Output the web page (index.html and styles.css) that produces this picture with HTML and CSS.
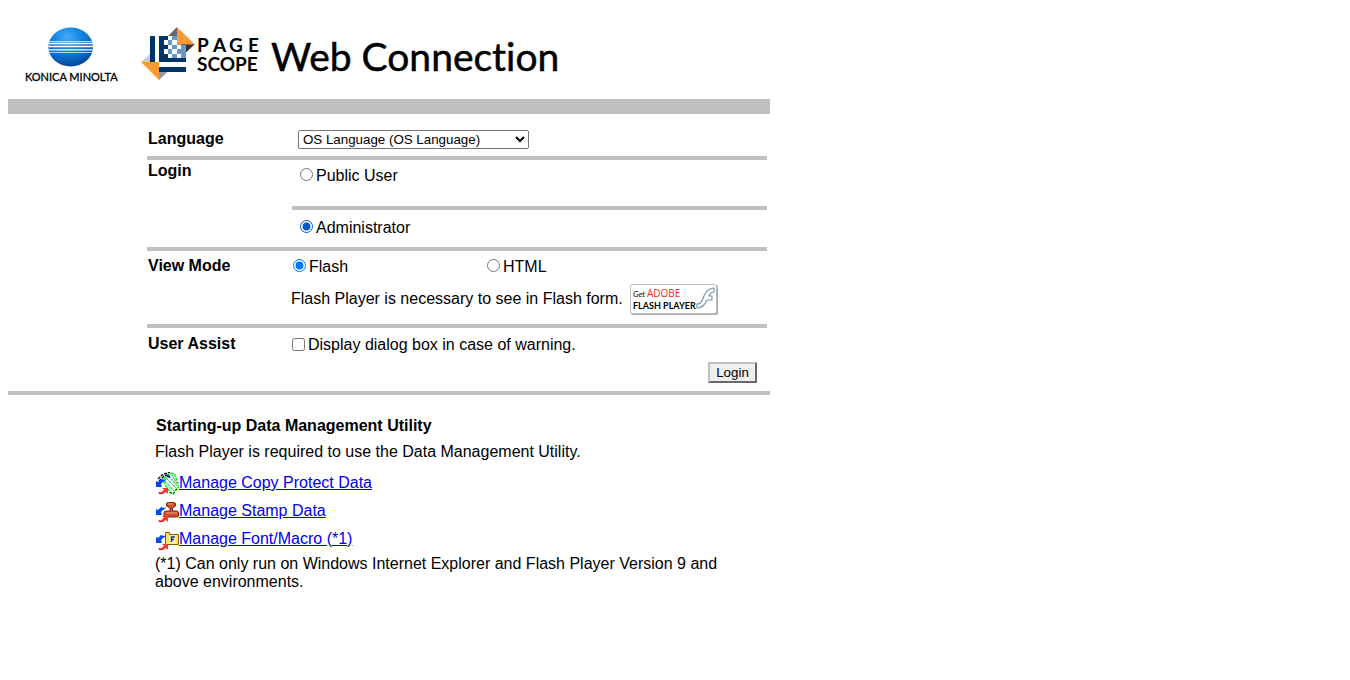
FILE: index.html
```html
<!DOCTYPE html>
<html lang="en">
<head>
<meta charset="utf-8">
<title>PageScope Web Connection</title>
<link rel="stylesheet" href="styles.css">
</head>
<body>
<main class="page">
<header class="banner">
<svg class="banner-logos" width="560" height="84" viewBox="8 8 560 84" role="img" aria-label="Konica Minolta PageScope Web Connection">
<defs>
<radialGradient id="globe" cx=".42" cy=".25" r=".8"><stop offset="0" stop-color="#46aaf6"/><stop offset=".4" stop-color="#1484e2"/><stop offset=".75" stop-color="#0b60bb"/><stop offset="1" stop-color="#063b7c"/></radialGradient>
<clipPath id="globe-clip"><ellipse cx="70.700" cy="47" rx="22.300" ry="19.500"/></clipPath>
</defs>
<ellipse cx="70.700" cy="47" rx="22.300" ry="19.500" fill="url(#globe)"/>
<g clip-path="url(#globe-clip)" stroke="#fff"><path d="M48 41.500h46M48 52.500h46" stroke-width="1" opacity=".7"/><path d="M48 43.500h46M48 49.800h46" stroke-width="1.300"/><path d="M48 46.500h46" stroke-width="1.600"/></g>
<text class="logo-company" x="25" y="81">KONICA MINOLTA</text>
<path fill="#666" d="M177 27v9h-9z"/><path fill="#ccc" d="M150 54v8h-9z"/><path fill="#333" d="M195 44l-9 8.500V44z"/>
<path fill="#003366" d="M150 36h5v26h-5zM159 36h27v26h-27zM159 67h27v5h-27z"/>
<path fill="#6699cc" d="M172 36h5v4h-5zM168 40h4v5h-4zM177 40h4v5h-4zM172 45h5v4h-5zM181 45h5v13h-5zM168 49h4v5h-4zM177 49h4v5h-4zM172 54h5v4h-5z"/>
<path fill="#fff" d="M168 36h4v4h-4zM177 36h4v4h-4zM164 40h4v5h-4zM172 40h5v5h-5zM168 45h4v4h-4zM177 45h4v4h-4zM164 49h4v5h-4zM172 49h5v5h-5zM168 54h4v4h-4zM177 54h4v4h-4z"/>
<path fill="#ff9933" d="M177 27l18 17.500h-18zM141 62h18v18z"/><path fill="#999" d="M159 72h8.500l-8.500 8z"/>
<text class="logo-pagescope" x="197 213 229 248" y="52">PAGE</text>
<text class="logo-pagescope" x="197" y="71">SCOPE</text>
<text class="logo-product" x="271" y="71">Web Connection</text>
</svg>
</header>
<form class="login">
<section class="row language"><label class="label" for="language">Language</label>
<div><select id="language" class="language-select"><option>OS Language (OS Language)</option></select></div></section>
<section class="row users"><h2 class="label">Login</h2>
<div class="user-options"><div class="option public"><input type="radio" name="user" id="public"><label for="public">Public User</label></div>
<div class="option admin"><input type="radio" name="user" id="admin" checked class="focused"><label for="admin">Administrator</label></div></div></section>
<section class="row view"><h2 class="label">View Mode</h2>
<div><div class="modes"><div class="option"><input type="radio" name="mode" id="flash" checked><label for="flash">Flash</label></div><div class="option"><input type="radio" name="mode" id="html"><label for="html">HTML</label></div></div>
<div class="player"><span>Flash Player is necessary to see in Flash form.</span>
<a href="#" aria-label="Get Adobe Flash Player"><svg class="badge" width="88" height="31" viewBox="0 0 88 31"><rect x="1" y="1" width="87" height="30" rx="2" fill="#aaa"/><rect x=".5" y=".5" width="86" height="29" rx="2" fill="#fff" stroke="#bbb"/><text class="badge-get" x="3" y="13">Get</text><text class="badge-adobe" x="17" y="13">ADOBE</text><path d="M47 5.500h2" stroke="#f33"/><text class="badge-player" x="3" y="25">FLASH PLAYER</text><path d="M84 4v4c-3 0-4 1.500-5 4h3v4h-5c-2 5-5 8-10 8v-4c4 0 5-3 7-8s5-8 10-8z" fill="#fff" stroke="#7797ad" stroke-width="1.200"/></svg></a></div></div></section>
<section class="row assist"><h2 class="label">User Assist</h2>
<div><div class="option"><input type="checkbox" id="warning"><label for="warning">Display dialog box in case of warning.</label></div><div class="actions"><button type="button" class="login-button">Login</button></div></div></section>
</form>
<section class="utilities">
<h2 class="utilities-title">Starting-up Data Management Utility</h2>
<p class="intro">Flash Player is required to use the Data Management Utility.</p>
<ul class="links">
<li><svg class="icon" viewBox="0 0 23 23"><path d="M2 7l4-4 8-3M3 9l5-5 7-2M5 10l5-5" fill="none" stroke="#000" stroke-width="1.300" stroke-dasharray="3 1"/><path d="M8 6l8-5 3 2 4 11-6 8-4-2-5-10z" fill="#d8ffe0" stroke="#0e2" stroke-width="1.400" stroke-dasharray="3 1"/><path d="M10 6l10 10M13 4l8 10M9 9l9 10M16 3l5 9" stroke="#064" stroke-dasharray="1 1"/><path d="M11 4l3 1" stroke="#00d" stroke-width="2"/><path d="M14 20l3 2 5-7" fill="none" stroke="#000" stroke-dasharray="2 2"/><use href="#arrows"/></svg><a href="#">Manage Copy Protect Data</a></li>
<li><svg class="icon" viewBox="0 0 23 23"><path d="M10.500 4q0-1.500 2-1.500h5q2 0 2 1.500v2l-3 2v3h4q2 0 2 2v3q0 1-2 1H10q-2 0-2-1v-3q0-2 2-2h4V8l-3.500-2z" fill="#cf4e2e" stroke="#7d2413"/><path d="M12 4h5M10 13h11" stroke="#f6a07e"/><use href="#arrows"/></svg><a href="#">Manage Stamp Data</a></li>
<li><svg class="icon" viewBox="0 0 23 23"><path d="M9.500 5.500v-1h4v2h9v10h-13z" fill="#ffdf55" stroke="#806000"/><path d="M13 7.500h7v8h-7z" fill="#ffffb0"/><path d="M15.500 14V9H19M15.500 11.500H18" fill="none" stroke="#113399" stroke-width="1.500"/><use href="#arrows"/></svg><a href="#">Manage Font/Macro (*1)</a></li>
</ul>
<p>(*1) Can only run on Windows Internet Explorer and Flash Player Version 9 and above environments.</p>
<svg class="symbols" aria-hidden="true"><g id="arrows"><path d="M0 9l2 1 3-3 3 1 2-1-1 2-2 1-2 2 1 3H0z" fill="#0647ef"/><path d="M2 20l3 .5 3-3-2-1.500h6v6l-2-2-3 2-4-.5z" fill="#f33"/><path d="M3 21.500h3" stroke="#a00"/></g></svg>
</section>
</main>
</body>
</html>
```
FILE: styles.css
```css
* { box-sizing: border-box; }
body { margin: 8px; background: #fff; color: #000; font: 16px/18px "Liberation Sans", Arial, sans-serif; }
h2, p, ul { margin: 0; padding: 0; font-size: 16px; }
svg { display: block; }
.page { max-width: 762px; }
.banner { border-bottom: 15px solid #c0c0c0; padding-bottom: 7px; }
.banner-logos { max-width: 100%; }
.logo-company { font: 11px Lato, sans-serif; stroke: #000; stroke-width: .3px; }
.logo-pagescope { font: bold 19px Lato, sans-serif; }
.logo-product { font: 39px Lato, sans-serif; font-variant-ligatures: none; stroke: #000; stroke-width: .5px; }
.login { padding: 0 3px 0 139px; border-bottom: 4px solid #c0c0c0; }
.row { display: grid; grid-template-columns: 145px 1fr; border-bottom: 4px solid #c0c0c0; }
.label { padding-left: 1px; font-weight: bold; }
.language { padding: 16px 0 7px; }
.language > div { padding-left: 6px; }
.language-select { display: block; width: 231px; height: 19px; font-family: "Liberation Sans", Arial, sans-serif; }
.option { display: flex; align-items: center; height: 18px; gap: 3px; }
.option input { width: 13px; height: 13px; margin: 0 0 1px; }
.option input[type="radio"] { margin-bottom: 3px; }
.option input.focused { accent-color: #005cc8; }
.users .label { padding-top: 2px; }
.users .option { box-sizing: content-box; padding-left: 8px; }
.public { padding-top: 7px; padding-bottom: 21px; border-bottom: 4px solid #c0c0c0; }
.admin { padding-top: 9px; padding-bottom: 10px; }
.view { padding: 6px 0 9px; }
.modes { display: grid; grid-template-columns: 194px 1fr; padding: 1px 0 0 1px; }
.player { display: flex; align-items: center; gap: 7px; margin: 8px 0 0 -1px; }
.player span { padding-bottom: 2px; }
.badge-get { font: italic 8px Lato, sans-serif; }
.badge-adobe { font: 10px "Open Sans", sans-serif; fill: #f22; }
.badge-player { font: bold 9px Lato, sans-serif; }
.assist { border: 0; padding: 7px 0 8px; }
.assist .option { margin-top: 1px; }
.actions { display: flex; justify-content: flex-end; padding: 8px 10px 0 0; }
.login-button { width: 49px; height: 21px; padding: 0; border: 2px solid; border-color: #c0c0c0 #696969 #696969 #c0c0c0; border-radius: 0; background: #efefef; color: #000; font-family: "Liberation Sans", Arial, sans-serif; }
.utilities { padding: 22px 40px 0 147px; }
.utilities-title { padding-left: 1px; }
.intro { padding-top: 8px; }
.links { padding: 9px 0 1px 1px; list-style: none; }
.links li { display: flex; height: 28px; }
.links a { padding-top: 4px; color: #00e; }
.icon { width: 23px; height: 23px; margin-top: 2px; }
.symbols { display: none; }
```
